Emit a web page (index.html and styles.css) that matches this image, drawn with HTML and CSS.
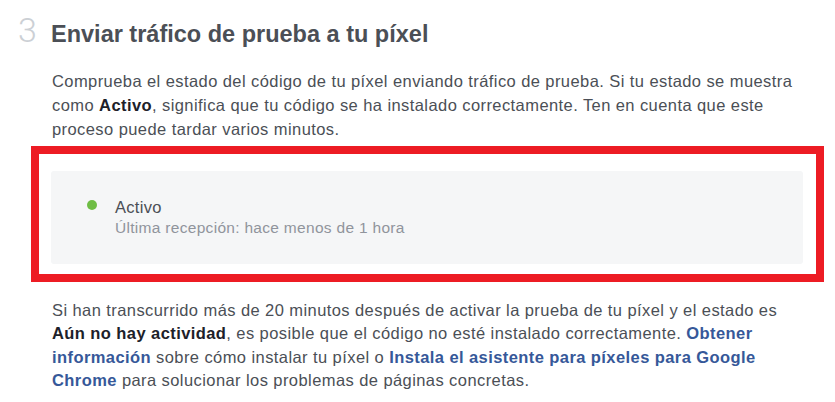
FILE: index.html
```html
<!DOCTYPE html>
<html lang="es">
<head>
<meta charset="utf-8">
<link rel="stylesheet" href="styles.css">
</head>
<body>
<div class="page">
  <div class="step-head">
    <span class="step-num">3</span>
    <h2 class="step-title">Enviar tráfico de prueba a tu píxel</h2>
  </div>
  <p class="text intro">Comprueba el estado del código de tu píxel enviando tráfico de prueba. Si tu estado se muestra como <b class="strong">Activo</b>, significa que tu código se ha instalado correctamente. Ten en cuenta que este proceso puede tardar varios minutos.</p>
  <div class="highlight">
    <div class="status-card">
      <span class="dot"></span>
      <div class="status-text">
        <div class="status-label">Activo</div>
        <div class="status-sub">Última recepción: hace menos de 1 hora</div>
      </div>
    </div>
  </div>
  <p class="text outro">Si han transcurrido más de 20 minutos después de activar la prueba de tu píxel y el estado es <b class="strong">Aún no hay actividad</b>, es posible que el código no esté instalado correctamente. <a class="link" href="#">Obtener información</a> sobre cómo instalar tu píxel o <a class="link" href="#">Instala el asistente para píxeles para Google Chrome</a> para solucionar los problemas de páginas concretas.</p>
</div>
</body>
</html>
```

FILE: styles.css
```css
html, body {
  margin: 0;
  padding: 0;
  background: #ffffff;
}

.page {
  font-family: "Liberation Sans", Arial, sans-serif;
  color: #4b4f56;
  padding-top: 10px;
}

.step-head {
  display: flex;
  align-items: baseline;
  padding-left: 18px;
}

.step-num {
  font-family: Roboto, "Liberation Sans", sans-serif;
  font-weight: 300;
  font-size: 34px;
  line-height: 40px;
  color: #ccd0d5;
  width: 33px;
}

.step-title {
  margin: 0;
  font-size: 23.5px;
  line-height: 40px;
  font-weight: bold;
  color: #4b4f56;
}

.text {
  margin: 0;
  width: 752px;
  margin-left: 52px;
  font-size: 16.5px;
  letter-spacing: 0.42px;
}

.intro {
  margin-top: 15px;
  line-height: 24px;
}

.outro {
  margin-top: 16.5px;
  line-height: 23.5px;
}

.strong {
  color: #1d2129;
}

.link {
  color: #365899;
  font-weight: bold;
  text-decoration: none;
}

.highlight {
  box-sizing: border-box;
  margin: 5px 0 0 31px;
  width: 793px;
  border: 8px solid #ed1c24;
  padding: 17px 13px 10px 12px;
}

.status-card {
  box-sizing: border-box;
  display: flex;
  align-items: flex-start;
  height: 93px;
  background: #f5f6f7;
  border-radius: 3px;
  padding: 25px 0 0 36px;
}

.dot {
  flex: none;
  width: 10px;
  height: 10px;
  border-radius: 50%;
  background: #6fbd45;
  margin-top: 4px;
  margin-right: 18px;
}

.status-label {
  font-size: 16.5px;
  line-height: 22px;
  letter-spacing: 0.3px;
  color: #4b4f56;
}

.status-sub {
  font-size: 15.5px;
  line-height: 19px;
  letter-spacing: 0.3px;
  color: #90949c;
}
```
